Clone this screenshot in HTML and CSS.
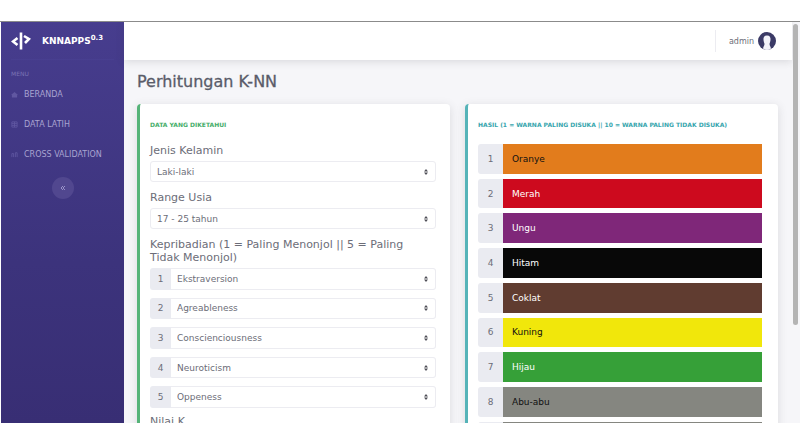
FILE: index.html
```html
<!DOCTYPE html>
<html lang="id">
<head>
    <meta charset="UTF-8">
    <title>KNNAPPS - Perhitungan K-NN</title>
    <link rel="stylesheet" href="styles.css">
</head>
<body>
<div class="wrapper">
    <nav class="sidebar">
        <a class="brand" href="#">
            <svg class="brandIcon" viewBox="0 0 20 18" fill="none" stroke="#fff" stroke-width="2.6">
                <path d="M6.500 6 L2 9.500 L6.500 13"/>
                <path d="M10 0.500 V17.500"/>
                <path d="M13 4 L18 7 L14 11"/>
            </svg>
            <span>KNNAPPS<sup>0.3</sup></span>
        </a>
        <div class="menuTitle">MENU</div>
        <ul class="menu">
            <li>
                <a href="#">
                    <svg viewBox="0 0 8 8" fill="currentColor"><path d="M4 1 L8 4.500 H7 V7.500 H1 V4.500 H0 Z"/></svg>
                    <span>BERANDA</span>
                </a>
            </li>
            <li>
                <a href="#">
                    <svg viewBox="0 0 8 8" fill="none" stroke="currentColor"><path d="M1 1 H7 V7 H1 Z M1 3 H7 M1 5 H7 M4 1 V7"/></svg>
                    <span>DATA LATIH</span>
                </a>
            </li>
            <li>
                <a href="#">
                    <svg viewBox="0 0 8 8" fill="none" stroke="currentColor"><path d="M1 7 V3 H3 V7 M5 7 V2 H7 V7"/></svg>
                    <span>CROSS VALIDATION</span>
                </a>
            </li>
        </ul>
        <button class="toggle" type="button" aria-label="Tutup menu">
            <svg viewBox="0 0 6 6" fill="none" stroke="currentColor"><path d="M3 1 L1 3 L3 5 M5 1 L3 3 L5 5"/></svg>
        </button>
    </nav>

    <div class="content">
        <header class="topbar">
            <a class="user" href="#">
                <span>admin</span>
                <svg class="avatar" viewBox="0 0 18 18">
                    <circle cx="9" cy="9" r="9" fill="#3b3a66"/>
                    <path d="M9 3.500 C11.800 3.500 12.800 5.500 12.500 8 C12.300 10 11.600 11 11.500 12 C11.500 13.500 12.500 14 13 16.500 Q11 18 9 18 Q7 18 5 16.500 C5.500 14 6.500 13.500 6.500 12 C6.400 11 5.700 10 5.500 8 C5.200 5.500 6.200 3.500 9 3.500 Z" fill="#f3f3fa"/>
                </svg>
            </a>
        </header>

        <main class="main">
            <h1>Perhitungan K-NN</h1>
            <div class="cards">
                <form class="card">
                    <h2>DATA YANG DIKETAHUI</h2>
                    <label for="gender">Jenis Kelamin</label>
                    <select id="gender"><option>Laki-laki</option><option>Perempuan</option></select>
                    <label for="age">Range Usia</label>
                    <select id="age"><option>17 - 25 tahun</option></select>
                    <fieldset>
                        <legend>Kepribadian (1 = Paling Menonjol || 5 = Paling Tidak Menonjol)</legend>
                        <div class="ranks">
                            <div class="rank"><label for="r1">1</label><select id="r1"><option>Ekstraversion</option></select></div>
                            <div class="rank"><label for="r2">2</label><select id="r2"><option>Agreableness</option></select></div>
                            <div class="rank"><label for="r3">3</label><select id="r3"><option>Conscienciousness</option></select></div>
                            <div class="rank"><label for="r4">4</label><select id="r4"><option>Neuroticism</option></select></div>
                            <div class="rank"><label for="r5">5</label><select id="r5"><option>Oppeness</option></select></div>
                        </div>
                    </fieldset>
                    <label for="k">Nilai K</label>
                    <select id="k"><option>3</option></select>
                </form>

                <section class="card cardTeal">
                    <h2>HASIL (1 = WARNA PALING DISUKA || 10 = WARNA PALING TIDAK DISUKA)</h2>
                    <div class="results">
                        <div class="result"><span>1</span><b class="orange">Oranye</b></div>
                        <div class="result"><span>2</span><b class="red">Merah</b></div>
                        <div class="result"><span>3</span><b class="purple">Ungu</b></div>
                        <div class="result"><span>4</span><b class="black">Hitam</b></div>
                        <div class="result"><span>5</span><b class="brown">Coklat</b></div>
                        <div class="result"><span>6</span><b class="yellow">Kuning</b></div>
                        <div class="result"><span>7</span><b class="green">Hijau</b></div>
                        <div class="result"><span>8</span><b class="gray">Abu-abu</b></div>
                        <div class="result"><span>9</span><b class="gray"></b></div>
                        <div class="result"><span>10</span><b class="gray"></b></div>
                    </div>
                </section>
            </div>
        </main>
        <div class="scrollbar"></div>
    </div>
</div>
</body>
</html>
```
FILE: styles.css
```css
* {
    box-sizing: border-box;
    margin: 0;
    padding: 0;
}
body {
    padding: 21px 0 22px;
    height: 100vh;
    overflow: hidden;
    background: #fff;
    color: #6c6d78;
    font-family: Verdana, "DejaVu Sans", sans-serif;
    font-size: 9px;
}
a {
    color: inherit;
    text-decoration: none;
}
ul {
    list-style: none;
}
.wrapper {
    display: flex;
    height: 100%;
    overflow: hidden;
    padding-left: 1px;
    border-top: 1px solid #8b8b8b;
}

/* sidebar */
.sidebar {
    flex: 0 0 123px;
    padding: 0 10px;
    background: linear-gradient(#473d8e, #3c337c 60%, #382e74);
    color: #a8a3d0;
    font-size: 8px;
}
.brand {
    display: flex;
    align-items: center;
    gap: 11px;
    height: 38px;
    border-bottom: 1px solid #483f90;
    color: #fff;
    font-size: 9px;
    font-weight: bold;
}
.brandIcon {
    width: 20px;
    height: 18px;
}
.brand sup {
    font-size: 7px;
    line-height: 1;
}
.menuTitle {
    padding-top: 10px;
    height: 19px;
    font-size: 6px;
    line-height: 8px;
    color: #7a73b4;
}
.menu a {
    display: flex;
    align-items: center;
    gap: 6px;
    height: 30px;
    white-space: nowrap;
}
.menu svg {
    width: 7px;
    height: 7px;
    color: #6057a1;
}
.toggle {
    display: grid;
    place-items: center;
    width: 22px;
    height: 22px;
    margin: 8px auto 0;
    border: 0;
    border-radius: 50%;
    background: #51478f;
    color: #9992c8;
}
.toggle svg {
    width: 6px;
    height: 6px;
}

/* content */
.content {
    position: relative;
    flex: 1;
    min-width: 0;
    background: #f6f6f9;
}
.topbar {
    display: flex;
    align-items: center;
    justify-content: flex-end;
    height: 38px;
    margin-right: 8px;
    padding-right: 16px;
    background: #fff;
    box-shadow: 0 2px 8px rgba(58, 59, 69, .15);
}
.user {
    display: flex;
    align-items: center;
    gap: 4px;
    height: 22px;
    padding-left: 13px;
    border-left: 1px solid #ececf1;
    font-size: 8px;
}
.avatar {
    width: 18px;
    height: 18px;
}
.main {
    padding: 12px 22px 0 13px;
}
h1 {
    margin-bottom: 12px;
    font-size: 16px;
    font-weight: normal;
    line-height: 20px;
    color: #5a5c69;
    -webkit-text-stroke: 0.3px #5a5c69;
}
.cards {
    display: grid;
    grid-template-columns: 1fr 1fr;
    gap: 15px;
}
.card {
    min-width: 0;
    padding: 16px 14px 20px 10px;
    border-left: 3px solid #55b378;
    border-radius: 4px;
    background: #fff;
    box-shadow: 0 2px 10px rgba(58, 59, 69, .15);
}
.cardTeal {
    padding-right: 16px;
    border-left-color: #55b3b8;
}
h2 {
    margin-bottom: 14px;
    font-size: 6px;
    line-height: 10px;
    white-space: nowrap;
    color: #45ad69;
}
.cardTeal h2 {
    color: #36a5ad;
}
.card > label, legend {
    display: block;
    font-size: 11px;
    line-height: 13px;
}
select {
    display: block;
    appearance: none;
    width: 100%;
    height: 21px;
    margin: 4px 0 9px;
    padding: 0 6px;
    border: 1px solid #ececf1;
    border-radius: 3px;
    background: #fff url("data:image/svg+xml,%3Csvg xmlns='http://www.w3.org/2000/svg' viewBox='0 0 4 6'%3E%3Cpath fill='%23505058' d='M2 0L4 2.500H0zM0 3.500H4L2 6z'/%3E%3C/svg%3E") no-repeat right 7px center / 4px 6px;
    color: #6c6d78;
    font: inherit;
}
fieldset {
    border: 0;
}
.ranks {
    display: grid;
    grid-auto-rows: 1fr;
    gap: 8px;
    height: 140px;
    margin: 4px 0 7px;
}
.rank, .result {
    display: flex;
}
.rank label, .result span {
    display: grid;
    place-items: center;
    flex: 0 0 21px;
    border-radius: 3px 0 0 3px;
    background: #eaebf1;
}
.rank select {
    height: 100%;
    margin: 0;
    border-left: 0;
    border-radius: 0 3px 3px 0;
}

/* hasil */
.results {
    display: grid;
    grid-auto-rows: 1fr;
    gap: 5px;
    height: 342px;
}
.result span {
    flex-basis: 25px;
}
.result b {
    display: flex;
    flex: 1;
    align-items: center;
    padding-left: 9px;
    color: #fff;
    font-weight: normal;
}
.result .orange {
    background: #e27c1c;
    color: #111;
}
.result .red {
    background: #cd0a1e;
}
.result .purple {
    background: #7f2779;
}
.result .black {
    background: #080808;
}
.result .brown {
    background: #603c30;
}
.result .yellow {
    background: #f1e70b;
    color: #111;
}
.result .green {
    background: #36a038;
}
.result .gray {
    background: #858680;
    color: #111;
}

.scrollbar {
    position: absolute;
    top: 2px;
    right: 2px;
    width: 5px;
    height: 75%;
    border-radius: 3px;
    background: #b4b4b4;
}
```
